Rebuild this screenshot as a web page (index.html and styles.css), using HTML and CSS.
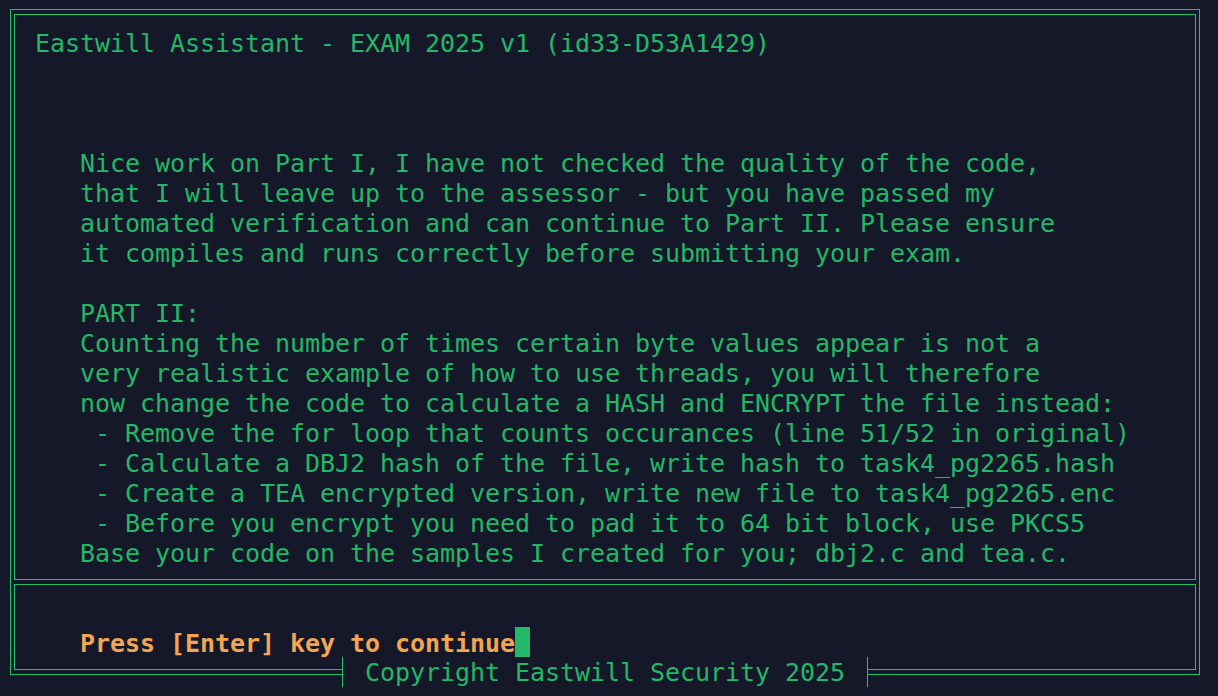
FILE: index.html
```html
<!DOCTYPE html>
<html lang="en">
<head>
<meta charset="utf-8">
<title>Eastwill Assistant</title>
<link rel="stylesheet" href="styles.css">
</head>
<body>
<div class="frame">
  <section class="panel main">
    <div class="title">Eastwill Assistant - EXAM 2025 v1 (id33-D53A1429)</div>
    <pre class="message">Nice work on Part I, I have not checked the quality of the code,
that I will leave up to the assessor - but you have passed my
automated verification and can continue to Part II. Please ensure
it compiles and runs correctly before submitting your exam.

PART II:
Counting the number of times certain byte values appear is not a
very realistic example of how to use threads, you will therefore
now change the code to calculate a HASH and ENCRYPT the file instead:
 - Remove the for loop that counts occurances (line 51/52 in original)
 - Calculate a DBJ2 hash of the file, write hash to task4_pg2265.hash
 - Create a TEA encrypted version, write new file to task4_pg2265.enc
 - Before you encrypt you need to pad it to 64 bit block, use PKCS5
Base your code on the samples I created for you; dbj2.c and tea.c.</pre>
  </section>
  <section class="panel prompt">
    <div class="prompt-line"><span class="prompt-text">Press [Enter] key to continue</span><span class="cursor"></span></div>
  </section>
  <div class="footer-label">Copyright Eastwill Security 2025</div>
</div>
</body>
</html>
```
FILE: styles.css
```css
html, body {
  margin: 0;
  padding: 0;
  background: #151829;
  width: 1218px;
  height: 696px;
  overflow: hidden;
}

body {
  font-family: "DejaVu Sans Mono", "Liberation Mono", monospace;
  font-size: 25px;
  letter-spacing: -0.05px;
  line-height: 30px;
  color: #22b868;
}

.frame {
  position: relative;
  box-sizing: border-box;
  margin: 9px 0 0 10px;
  width: 1190px;
  height: 666px;
  border: 1px solid #22c06a;
  padding: 4px 3px 4px 3px;
  display: flex;
  flex-direction: column;
  gap: 4px;
}

.panel {
  box-sizing: border-box;
  border: 1px solid #22c06a;
}

.main {
  height: 566px;
  padding: 14px 0 0 20px;
}

.title {
  white-space: pre;
}

.message {
  margin: 90px 0 0 45px;
  font: inherit;
  letter-spacing: inherit;
  white-space: pre;
}

.prompt {
  height: 86px;
  padding: 44px 0 0 65px;
}

.prompt-line {
  display: flex;
  align-items: flex-start;
}

.prompt-text {
  font-weight: bold;
  color: #f2a552;
  white-space: pre;
}

.cursor {
  display: inline-block;
  width: 15px;
  height: 30px;
  margin-top: -2px;
  background: #22b868;
}

.footer-label {
  position: absolute;
  left: 331px;
  top: 647px;
  box-sizing: border-box;
  width: 526px;
  height: 30px;
  padding: 2px 0 0 22px;
  line-height: 28px;
  border-left: 1px solid #22c06a;
  border-right: 1px solid #22c06a;
  background: #151829;
  white-space: pre;
}
```
